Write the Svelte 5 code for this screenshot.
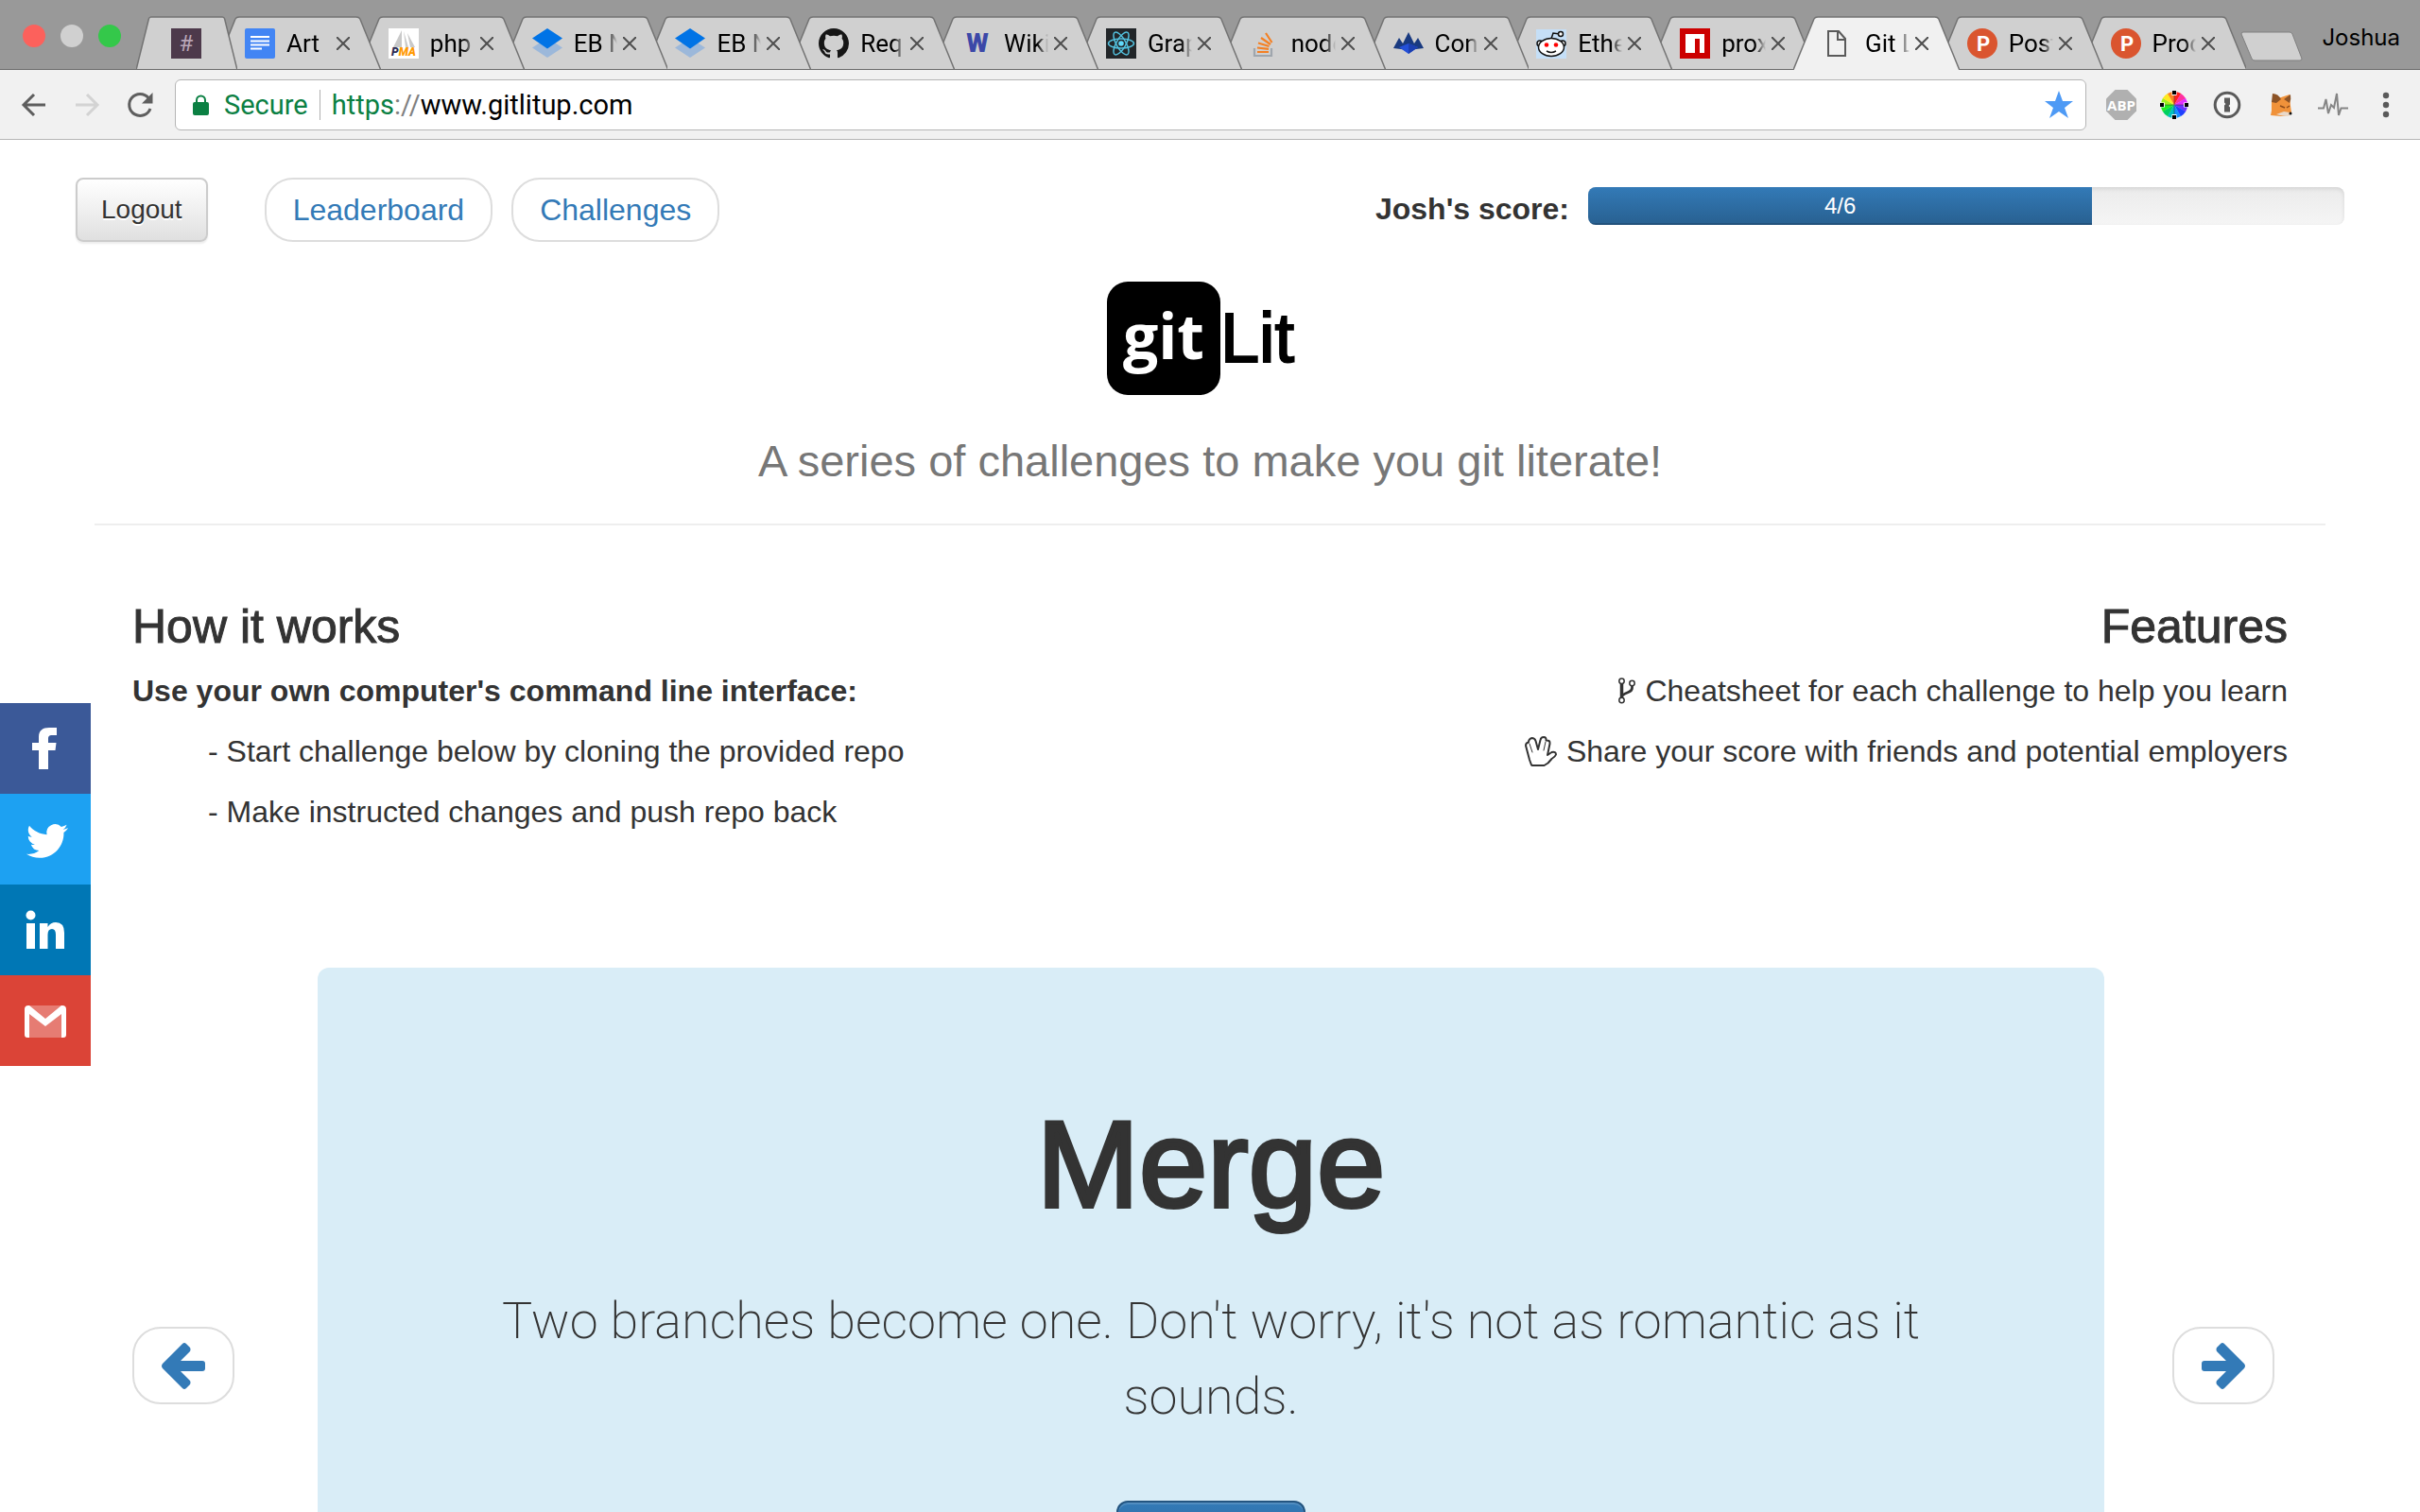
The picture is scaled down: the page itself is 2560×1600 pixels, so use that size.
<script>
const tabs = [
  { icon: 'docs', title: 'Art' },
  { icon: 'pma', title: 'php' },
  { icon: 'sourcetree', title: 'EB N' },
  { icon: 'sourcetree', title: 'EB N' },
  { icon: 'github', title: 'Req' },
  { icon: 'wiki', title: 'Wiki' },
  { icon: 'react', title: 'Grap' },
  { icon: 'stack', title: 'node' },
  { icon: 'crown', title: 'Con' },
  { icon: 'reddit', title: 'Ethe' },
  { icon: 'npm', title: 'prox' },
  { icon: 'page', title: 'Git L', active: true },
  { icon: 'hunt', title: 'Post' },
  { icon: 'hunt', title: 'Prod' },
]

const user = 'Josh'
const total = 6
let done = $state(4)
const percent = $derived((done / total) * 100)

const socials = [
  { name: 'Facebook', color: '#3b5998' },
  { name: 'Twitter', color: '#1da1f2' },
  { name: 'LinkedIn', color: '#0077b5' },
  { name: 'Gmail', color: '#db4437' },
]

const wheel = ['#ff2020', '#ff30a0', '#e030ff', '#7030ff', '#2040ff', '#1090ff', '#00c0c0', '#00d060', '#20f020', '#a0f020', '#ffe820', '#ff8020']
</script>

{#snippet tabShape(fill)}
  <svg class="tab-shape" viewBox="0 0 176 57" preserveAspectRatio="none" aria-hidden="true">
    <path d="M0 57 L22 3 Q23 1 26 1 H150 Q153 1 154 3 L176 57" {fill} stroke="#737373" stroke-width="1.5" vector-effect="non-scaling-stroke"/>
  </svg>
{/snippet}

{#snippet favicon(name)}
  <svg class="favicon" viewBox="0 0 32 32" aria-hidden="true">
    {#if name === 'slack'}
      <rect width="32" height="32" fill="#4d394b"/>
      <text x="16" y="24" font-size="24" text-anchor="middle" fill="#b9a6b7">#</text>
    {:else if name === 'docs'}
      <rect width="32" height="32" rx="2" fill="#4285f4"/>
      <path d="M6 9h20M6 13.500h20M6 17.500h20M6 21.500h12" stroke="#fff" stroke-width="2"/>
    {:else if name === 'pma'}
      <rect width="32" height="32" fill="#fff"/>
      <path d="M14 2L5 20h9zM16 3l2 17h3zM20 5l8 15h-5z" fill="#c9c9c9"/>
      <text x="16" y="29" font-size="12" font-weight="900" font-style="italic" text-anchor="middle" fill="#2d2d55">P<tspan fill="#f90">MA</tspan></text>
    {:else if name === 'sourcetree'}
      <path d="M16 10L32 20.500 16 31 0 20.500z" fill="#9cb8da"/>
      <path d="M16 0L32 10.500 16 21.500 0 10.500z" fill="#0073e6"/>
    {:else if name === 'github'}
      <path transform="scale(2)" fill="#161616" fill-rule="evenodd" d="M8 0C3.58 0 0 3.58 0 8c0 3.54 2.29 6.53 5.47 7.59.4.07.55-.17.55-.38 0-.19-.01-.82-.01-1.49-2.01.37-2.53-.49-2.69-.94-.09-.23-.48-.94-.82-1.13-.28-.15-.68-.52-.01-.53.63-.01 1.08.58 1.23.82.72 1.21 1.87.87 2.33.66.07-.52.28-.87.51-1.07-1.78-.2-3.64-.89-3.64-3.95 0-.87.31-1.59.82-2.15-.08-.2-.36-1.02.08-2.12 0 0 .67-.21 2.2.82.64-.18 1.32-.27 2-.27s1.36.09 2 .27c1.53-1.04 2.2-.82 2.2-.82.44 1.1.16 1.92.08 2.12.51.56.82 1.27.82 2.15 0 3.07-1.87 3.75-3.65 3.95.29.25.54.73.54 1.48 0 1.07-.01 1.93-.01 2.2 0 .21.15.46.55.38A8.01 8.01 0 0016 8c0-4.42-3.58-8-8-8z"/>
    {:else if name === 'wiki'}
      <text x="16" y="25" font-size="27" font-weight="900" text-anchor="middle" fill="#3c48a8">W</text>
    {:else if name === 'react'}
      <rect width="32" height="32" fill="#222629"/>
      <g fill="none" stroke="#53c1de" stroke-width="1.500">
        <ellipse cx="16" cy="16" rx="13.500" ry="5"/>
        <ellipse cx="16" cy="16" rx="13.500" ry="5" transform="rotate(60 16 16)"/>
        <ellipse cx="16" cy="16" rx="13.500" ry="5" transform="rotate(120 16 16)"/>
      </g>
      <circle cx="16" cy="16" r="2.800" fill="#61dafb"/>
    {:else if name === 'stack'}
      <path d="M5 21v8h18v-8" fill="none" stroke="#9fa6ad" stroke-width="2.200"/>
      <path d="M8 25h12M8 20.500l12 1.300M9 15.500l11.500 3.500M12 10l10 7M17 5l6.500 10" stroke="#f48024" stroke-width="2.200"/>
    {:else if name === 'crown'}
      <path d="M0 21L6 10l4 6L16 4l6 12 4-6 6 11-16 2z" fill="#193a80"/>
      <path d="M6 20l10-4 10 4-10 7z" fill="#2450d8"/>
      <path d="M16 16l10 4-10 7z" fill="#1c3fb0"/>
    {:else if name === 'reddit'}
      <rect y="1" width="32" height="31" fill="#c5dff7"/>
      <g fill="#fff" stroke="#111" stroke-width="1.500">
        <path d="M16 11L18 5l7 1" fill="none"/>
        <circle cx="26" cy="6" r="2.500"/>
        <circle cx="4" cy="16" r="3"/>
        <circle cx="28" cy="16" r="3"/>
        <ellipse cx="16" cy="20" rx="13.500" ry="9.500"/>
        <path d="M11 24q5 3 10 0" fill="none"/>
      </g>
      <circle cx="11" cy="17.500" r="2.300" fill="#f00"/>
      <circle cx="21" cy="17.500" r="2.300" fill="#f00"/>
    {:else if name === 'npm'}
      <rect width="32" height="32" fill="#c00"/>
      <path d="M6 6h20v20h-5V11h-5v15H6z" fill="#fff"/>
    {:else if name === 'page'}
      <path d="M5 3h11l7 8v18H5zM15 3v9h8" fill="none" stroke="#5a5a5a" stroke-width="2"/>
    {:else if name === 'hunt'}
      <circle cx="16" cy="16" r="16" fill="#da552f"/>
      <text x="17" y="24" font-size="22" font-weight="700" text-anchor="middle" fill="#fff">P</text>
    {/if}
  </svg>
{/snippet}

<div class="browser">
  <div class="tab-strip">
    <div class="lights">
      <span class="light red"></span>
      <span class="light grey"></span>
      <span class="light green"></span>
    </div>

    <div class="tabs">
      <div class="tab pinned" style:z-index={tabs.length + 1}>
        {@render tabShape('#d0d0d0')}
        <button class="tab-title" aria-label="Slack">{@render favicon('slack')}</button>
      </div>
      {#each tabs as tab, i}
        <div class="tab" class:active={tab.active} style:z-index={tab.active ? 30 : tabs.length - i}>
          {@render tabShape(tab.active ? '#f1f1f1' : '#d0d0d0')}
          <button class="tab-title">
            {@render favicon(tab.icon)}
            <span>{tab.title}</span>
          </button>
          <button class="tab-close" aria-label="Close tab">
            <svg width="14" height="14" viewBox="0 0 14 14"><path d="M0 0l14 14M14 0L0 14" stroke="#4f4f4f" stroke-width="2"/></svg>
          </button>
        </div>
      {/each}
    </div>

    <button class="new-tab" aria-label="New tab">
      <svg width="66" height="32" viewBox="0 0 66 32">
        <path d="M3 1H52Q54 1 55 3L65 29Q65 31 63 31H15Q13 31 12 29L1 3Q1 1 3 1z" fill="#d0d0d0" stroke="#808080"/>
      </svg>
    </button>
    <span class="profile">Joshua</span>
  </div>

  <div class="toolbar">
    <div class="nav">
      <button aria-label="Back">
        <svg viewBox="0 0 32 32"><path d="M28 16H5M16 5L5 16l11 11" fill="none" stroke="#5e5e5e" stroke-width="3"/></svg>
      </button>
      <button aria-label="Forward" disabled>
        <svg viewBox="0 0 32 32"><path d="M4 16h23M16 5l11 11-11 11" fill="none" stroke="#d3d3d3" stroke-width="3"/></svg>
      </button>
      <button aria-label="Reload">
        <svg viewBox="0 0 32 32">
          <path d="M25 8.500A11.500 11.500 0 1 0 27 20" fill="none" stroke="#5e5e5e" stroke-width="3"/>
          <path d="M29.500 3v11.500H18z" fill="#5e5e5e"/>
        </svg>
      </button>
    </div>

    <div class="address">
      <svg class="lock" width="17" height="22" viewBox="0 0 17 22">
        <rect y="8" width="17" height="14" rx="2" fill="#0b8043"/>
        <path d="M4 9V6a4.500 4.500 0 0 1 9 0v3" fill="none" stroke="#0b8043" stroke-width="2"/>
      </svg>
      <span class="secure">Secure</span>
      <span class="url"><span class="scheme">https</span><span class="slashes">://</span>www.gitlitup.com</span>
      <button class="star" aria-label="Bookmark this page">
        <svg viewBox="0 0 32 32"><path d="M16 1l4 11h11l-9 7 4 11-10-7-10 7 4-11-9-7h11z" fill="#4e9af5"/></svg>
      </button>
    </div>

    <div class="extensions">
      <button aria-label="Adblock Plus">
        <svg viewBox="0 0 32 32">
          <path d="M9.500 0h13L32 9.500v13L22.500 32h-13L0 22.500v-13z" fill="#b0b0b0"/>
          <text class="abp" x="16" y="22" font-size="15" font-weight="700" text-anchor="middle" fill="#fff">ABP</text>
        </svg>
      </button>
      <button aria-label="Color picker">
        <svg viewBox="0 0 32 32">
          {#each wheel as color, i}
            <path d="M16 16V2A14 14 0 0 1 23.300 4z" fill={color} transform="rotate({i * 30} 16 16)"/>
          {/each}
          <path d="M16 2v4M16 26v4M2 16h4M26 16h4" stroke="#fff" stroke-width="5"/>
          <path d="M16 1v4M16 27v4M1 16h4M27 16h4" stroke="#000" stroke-width="4"/>
          <path d="M16 6v20M6 16h20" stroke="#333" stroke-width="0.500"/>
        </svg>
      </button>
      <button aria-label="1Password">
        <svg viewBox="0 0 32 32">
          <circle cx="16" cy="16" r="12.800" fill="#f6f6f6" stroke="#5a5a5a" stroke-width="3"/>
          <path d="M13 8.500h6v7l-1.500 1.500 1.500 1.500v5h-6v-7l1.500-1.500-1.500-1.500z" fill="#5a5a5a"/>
        </svg>
      </button>
      <button aria-label="MetaMask">
        <svg viewBox="0 0 32 32">
          <path d="M7 12L14 9l12-4 1 12 1 7-3 3-8 1-11-1 1-5z" fill="#f0923a"/>
          <path d="M8 4q6 0 9 6l-5 4-5-1zM27 5l-7 5 6 4q2-4 1-9z" fill="#8c5326"/>
          <path d="M12 26l8-3 6 1-1 4-9-1z" fill="#e9d8c8"/>
          <path d="M16 17l5 2M26 17l-3 2" stroke="#8c4b1a" stroke-width="1.500"/>
          <circle cx="27" cy="25" r="1.500" fill="#111"/>
        </svg>
      </button>
      <button aria-label="Pulse">
        <svg viewBox="0 0 32 32"><path d="M0 19.500h6L8.500 10l2.500 15 3-9 3 3 3-15 2 23 2.500-7.500H32" fill="none" stroke="#858585" stroke-width="2"/></svg>
      </button>
      <button aria-label="Menu">
        <svg viewBox="0 0 32 32" fill="#5a5a5a"><circle cx="16" cy="6" r="3.200"/><circle cx="16" cy="16" r="3.200"/><circle cx="16" cy="26" r="3.200"/></svg>
      </button>
    </div>
  </div>

  <div class="page">
    <header class="top-bar">
      <button class="logout">Logout</button>
      <nav class="pills">
        <a href="#leaderboard">Leaderboard</a>
        <a href="#challenges">Challenges</a>
      </nav>
      <div class="score">
        <strong id="score-label">{user}'s score:</strong>
        <div class="progress" role="progressbar" aria-labelledby="score-label" aria-valuenow={done} aria-valuemin="0" aria-valuemax={total}>
          <div class="progress-bar" style:width="{percent}%">{done}/{total}</div>
        </div>
      </div>
    </header>

    <div class="brand">
      <span class="brand-git">git</span>
      <span class="brand-lit">Lit</span>
    </div>
    <p class="tagline">A series of challenges to make you git literate!</p>
    <hr>

    <div class="intro">
      <section>
        <h3>How it works</h3>
        <p><strong>Use your own computer's command line interface:</strong></p>
        <p class="step">- Start challenge below by cloning the provided repo</p>
        <p class="step">- Make instructed changes and push repo back</p>
      </section>
      <section class="features">
        <h3>Features</h3>
        <p>
          <svg width="18" height="28" viewBox="0 0 18 28" fill="none" stroke="#333">
            <path d="M3.500 6v16" stroke-width="3.500"/>
            <path d="M14.500 8v3q0 3-4 4.500T4 19" stroke-width="2.800"/>
            <g fill="#fff" stroke-width="1.500"><circle cx="3.500" cy="3.800" r="2.700"/><circle cx="14.500" cy="6" r="2.700"/><circle cx="3.500" cy="24" r="2.700"/></g>
          </svg>
          Cheatsheet for each challenge to help you learn
        </p>
        <p>
          <svg width="34" height="32" viewBox="0 0 34 32" fill="none" stroke="#333" stroke-linejoin="round" stroke-linecap="round">
            <path d="M7 30.500L5 25 1 10Q1 7 4 6.500 4 3 7.500 2 10.500 2 11.500 5L14 14 16.500 4Q17 1 20 1 23 1 22.500 4.500 27 4 26.500 8L24 20l4.500-3Q33 16 33 19.500 32 22 28.500 24L24.500 28.500 20.500 31H8z" stroke-width="2"/>
            <path d="M5 8l3 9M22 6l-2 9" stroke-width="1"/>
          </svg>
          Share your score with friends and potential employers
        </p>
      </section>
    </div>

    <div class="carousel">
      <button class="arrow" aria-label="Previous challenge">
        <svg width="46" height="49" viewBox="0 0 46 49">
          <path id="arrow" d="M1 22L22 1Q24-1 26 1L30 5Q31 7 30 9L20 19H43Q46 19 46 22V27Q46 30 43 30H20L30 40Q31 42 30 44L26 48Q24 50 22 48L1 27Q-1 24.500 1 22z" fill="#337ab7"/>
        </svg>
      </button>
      <div class="jumbotron">
        <h1>Merge</h1>
        <p>Two branches become one. Don't worry, it's not as romantic as it sounds.</p>
        <button class="start" aria-label="Start challenge"></button>
      </div>
      <button class="arrow" aria-label="Next challenge">
        <svg width="46" height="49" viewBox="0 0 46 49">
          <use href="#arrow" transform="translate(46 0) scale(-1 1)"/>
        </svg>
      </button>
    </div>
  </div>

  <aside class="social">
    {#each socials as social}
      <a href="#share" aria-label={social.name} style:background={social.color}>
        <svg viewBox="0 0 96 96" fill="#fff">
          {#if social.name === 'Facebook'}
            <path d="M41 70V50h-7v-8h7v-6c0-7 4-10 11-10h8v8h-5c-3 0-4 1-4 4v4h8.500l-1 8H51v20z"/>
          {:else if social.name === 'Twitter'}
            <path transform="translate(28 28) scale(1.830)" d="M23.953 4.570a10 10 0 01-2.825.775 4.958 4.958 0 002.163-2.723c-.951.555-2.005.959-3.127 1.184a4.920 4.920 0 00-8.384 4.482C7.690 8.095 4.067 6.130 1.640 3.162a4.822 4.822 0 00-.666 2.475c0 1.710.870 3.213 2.188 4.096a4.904 4.904 0 01-2.228-.616v.060a4.923 4.923 0 003.946 4.827 4.996 4.996 0 01-2.212.085 4.936 4.936 0 004.604 3.417 9.867 9.867 0 01-6.102 2.105c-.390 0-.779-.023-1.170-.067a13.995 13.995 0 007.557 2.209c9.053 0 13.998-7.496 13.998-13.985 0-.210 0-.420-.015-.630A9.935 9.935 0 0024 4.590z"/>
          {:else if social.name === 'LinkedIn'}
            <circle cx="32.500" cy="32.500" r="5"/>
            <path d="M28 41h9v27h-9zM42 41h8.500v4q3-5 8.500-5 9 0 9 11v17h-9V53q0-6-4-6-4.500 0-4.500 6v15H42z"/>
          {:else}
            <path d="M31 32h34v34H31z" opacity="0.3"/>
            <path d="M26 36q0-4 4-4h1l17 14 17-14h1q4 0 4 4v27q0 3-3 3h-2V41L48 54 31 41v25h-2q-3 0-3-3z"/>
          {/if}
        </svg>
      </a>
    {/each}
  </aside>
</div>

<style>
  :global(body) {
    margin: 0;
    background: #fff;
  }

  .browser {
    display: flex;
    flex-direction: column;
    height: 100vh;
    overflow: hidden;
    font-family: "Liberation Sans", Arial, sans-serif;
    color: #333;
  }

  button {
    margin: 0;
    padding: 0;
    border: none;
    background: none;
    font: inherit;
    color: inherit;
    cursor: pointer;
  }

  svg {
    display: block;
  }

  h1,
  h3,
  p {
    margin: 0;
  }

  /* tab strip */
  .tab-strip {
    position: relative;
    display: flex;
    flex: none;
    align-items: flex-end;
    height: 74px;
    background: #999;
    font-family: Roboto, sans-serif;
    font-size: 26px;
    color: #000;
  }

  .tab-strip::after {
    content: '';
    position: absolute;
    left: 0;
    right: 0;
    bottom: 0;
    height: 1px;
    background: #6b6b6b;
    z-index: 20;
  }

  .lights {
    display: flex;
    gap: 16px;
    align-self: flex-start;
    padding: 26px 16px 0 24px;
  }

  .light {
    width: 24px;
    height: 24px;
    border-radius: 50%;
  }

  .red {
    background: #fc615c;
  }

  .grey {
    background: #d0d0d0;
  }

  .green {
    background: #34c84a;
  }

  .tabs {
    display: flex;
    flex: 1;
    min-width: 0;
  }

  .tab {
    position: relative;
    display: flex;
    flex: 1 1 0;
    align-items: center;
    min-width: 0;
    height: 57px;
    padding: 0 33px 0 32px;
    margin-right: -24px;
    box-sizing: border-box;
  }

  .tab:last-child {
    margin-right: 0;
  }

  .tab.pinned {
    flex: none;
    width: 107px;
    padding: 0 38px 0 37px;
  }

  .tab-shape {
    position: absolute;
    inset: 0;
    width: 100%;
    height: 100%;
  }

  .tab-title {
    position: relative;
    display: flex;
    flex: 1;
    align-items: center;
    gap: 12px;
    min-width: 0;
    text-align: left;
  }

  .tab-title span {
    flex: 1;
    overflow: hidden;
    white-space: nowrap;
    mask-image: linear-gradient(to right, #000 75%, transparent);
  }

  .favicon {
    flex: none;
    width: 32px;
    height: 32px;
  }

  .tab-close {
    position: relative;
    margin-left: 6px;
  }

  .new-tab {
    align-self: flex-start;
    margin: 33px 0 0 -6px;
  }

  .profile {
    align-self: flex-start;
    padding: 24px 21px 0 20px;
    font-family: Inter, sans-serif;
    font-size: 24px;
    line-height: 32px;
  }

  /* toolbar */
  .toolbar {
    display: flex;
    flex: none;
    align-items: center;
    gap: 21px;
    height: 73px;
    padding: 0 20px;
    background: #f1f1f1;
    border-bottom: 1px solid #b5b5b5;
  }

  .nav,
  .extensions {
    display: flex;
    gap: 24px;
  }

  .nav button,
  .extensions button,
  .star {
    width: 32px;
    height: 32px;
  }

  .abp {
    font-family: "Open Sans", sans-serif;
  }

  .address {
    display: flex;
    flex: 1;
    align-items: center;
    height: 52px;
    padding: 0 12px 0 18px;
    border: 1px solid #b5b5b5;
    border-radius: 6px;
    background: #fff;
    font-family: Roboto, sans-serif;
    font-size: 29px;
    color: #000;
  }

  .secure {
    margin-left: 16px;
    padding-right: 12px;
    border-right: 1px solid #b0b0b0;
    line-height: 32px;
    color: #0b8043;
  }

  .url {
    flex: 1;
    margin-left: 12px;
  }

  .scheme {
    color: #0b8043;
  }

  .slashes {
    color: #808080;
  }

  /* page */
  .page {
    flex: 1;
    min-height: 0;
    overflow: auto;
    scrollbar-width: none;
    padding-top: 40px;
    font-size: 32px;
    line-height: 44px;
  }

  .top-bar {
    display: flex;
    align-items: flex-start;
    padding: 0 80px;
  }

  .logout {
    height: 68px;
    padding: 0 25px;
    border: 2px solid #ccc;
    border-radius: 8px;
    background: linear-gradient(#fff, #e0e0e0);
    box-shadow: inset 0 2px 0 rgba(255, 255, 255, 0.15), 0 2px 2px rgba(0, 0, 0, 0.08);
    font-size: 28px;
    text-shadow: 0 2px 0 #fff;
  }

  .pills {
    display: flex;
    gap: 20px;
    margin-left: 60px;
  }

  .pills a {
    padding: 0 28px;
    border: 2px solid #ddd;
    border-radius: 30px;
    line-height: 64px;
    color: #337ab7;
    text-decoration: none;
  }

  .score {
    display: flex;
    gap: 20px;
    margin-top: 10px;
    margin-left: auto;
    line-height: 46px;
    white-space: nowrap;
  }

  .progress {
    width: 800px;
    height: 40px;
    overflow: hidden;
    border-radius: 8px;
    background: linear-gradient(#ebebeb, #f5f5f5);
    box-shadow: inset 0 2px 4px rgba(0, 0, 0, 0.1);
  }

  .progress-bar {
    height: 100%;
    background: linear-gradient(#337ab7, #286090);
    box-shadow: inset 0 -2px 0 rgba(0, 0, 0, 0.15);
    font-size: 24px;
    line-height: 40px;
    text-align: center;
    color: #fff;
  }

  .brand {
    display: flex;
    align-items: center;
    justify-content: center;
    margin-top: 42px;
    padding-right: 20px;
    color: #000;
  }

  .brand-git {
    width: 120px;
    height: 120px;
    border-radius: 22px;
    background: #000;
    font-family: "Open Sans", sans-serif;
    font-size: 66px;
    font-weight: 700;
    line-height: 112px;
    text-align: center;
    color: #fff;
  }

  .brand-lit {
    font-size: 74px;
    line-height: 120px;
    -webkit-text-stroke: 2px #000;
  }

  .tagline {
    margin-top: 40px;
    font-size: 47px;
    line-height: 60px;
    text-align: center;
    color: #777;
  }

  hr {
    height: 2px;
    margin: 36px 100px 0;
    border: none;
    background: #eee;
  }

  .intro {
    display: flex;
    justify-content: space-between;
    padding: 81px 140px 0;
  }

  h3 {
    font-size: 50px;
    font-weight: 400;
    line-height: 52px;
    -webkit-text-stroke: 1px #333;
  }

  .intro p {
    margin-top: 20px;
  }

  .intro .step {
    padding-left: 80px;
  }

  .features {
    text-align: right;
  }

  .features p {
    display: flex;
    align-items: center;
    justify-content: flex-end;
    gap: 10px;
  }

  .carousel {
    display: flex;
    align-items: flex-start;
    margin-top: 143px;
    padding: 0 154px 0 140px;
  }

  .arrow {
    display: flex;
    flex: none;
    align-items: center;
    justify-content: center;
    width: 108px;
    height: 82px;
    margin-top: 380px;
    border: 2px solid #ddd;
    border-radius: 30px;
  }

  .jumbotron {
    flex: 1;
    margin: 0 72px 0 88px;
    padding: 138px 120px 96px;
    border-radius: 12px;
    background: #d9edf7;
    text-align: center;
  }

  h1 {
    font-size: 130px;
    font-weight: 400;
    line-height: 140px;
    -webkit-text-stroke: 4px #333;
  }

  .jumbotron p {
    margin-top: 56px;
    font-family: Roboto, "Liberation Sans", sans-serif;
    font-size: 54px;
    font-weight: 200;
    line-height: 80px;
  }

  .start {
    width: 200px;
    height: 92px;
    margin-top: 70px;
    border: 2px solid #245580;
    border-radius: 12px;
    background: linear-gradient(#337ab7, #265a88);
    box-shadow: inset 0 2px 0 rgba(255, 255, 255, 0.15);
  }

  /* share buttons pinned to the left edge */
  .social {
    position: fixed;
    top: 744px;
    left: 0;
  }

  .social a {
    display: block;
    width: 96px;
    height: 96px;
  }
</style>
